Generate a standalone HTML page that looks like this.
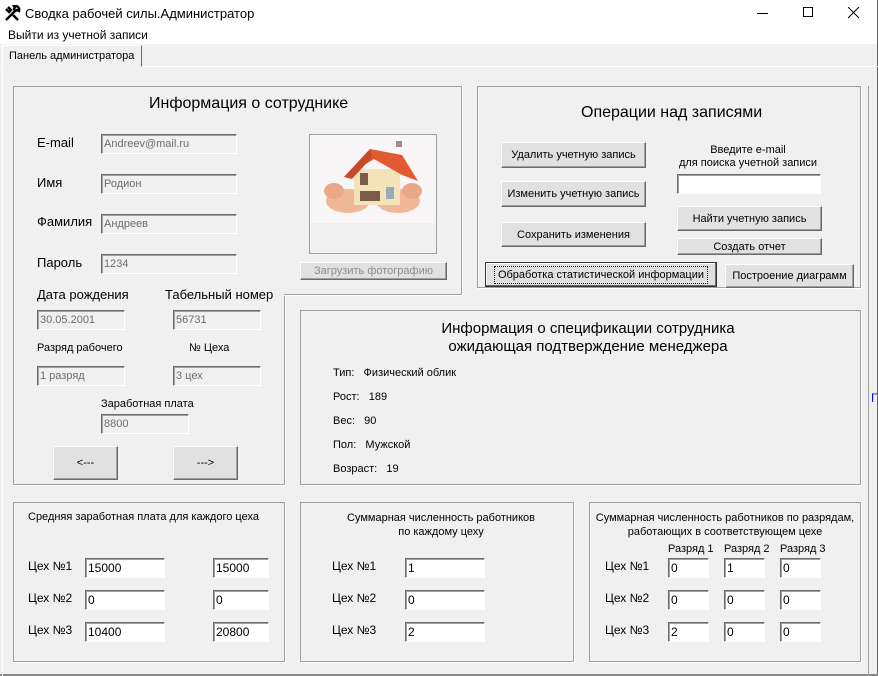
<!DOCTYPE html><html><head><meta charset="utf-8"><style>
*{margin:0;padding:0;box-sizing:border-box}
body{width:878px;height:676px;background:#f0f0f0;position:relative;overflow:hidden;font-family:"Liberation Sans","DejaVu Sans",sans-serif;font-size:11px;color:#000}
.a{position:absolute;white-space:nowrap}
.tb{position:absolute;height:20px;border:1px solid;border-color:#6d6d6d #fff #fff #6d6d6d;box-shadow:inset 1px 1px #a0a0a0;background:#f0f0f0;color:#6d6d6d;font-size:11px;padding:3px 0 0 2px;line-height:13px;white-space:nowrap}
.w{background:#fff;color:#000;font-size:12px}
.bt{position:absolute;background:#e1e1e1;border:1px solid;border-color:#fff #696969 #696969 #fff;box-shadow:inset -1px -1px #a0a0a0;display:flex;align-items:center;justify-content:center;font-size:11px;white-space:nowrap}
.pn{position:absolute;border:1px solid #a0a0a0;box-shadow:1px 1px #fff}
.c{text-align:center}
</style></head><body>
<div class="a" style="left:0;top:0;width:878px;height:44px;background:#fff"></div>
<div class="a" style="left:877px;top:0;width:1px;height:676px;background:#666"></div>
<div class="a" style="left:0;top:674px;width:878px;height:2px;background:#888"></div>
<svg class="a" style="left:4px;top:5px" width="17" height="17" viewBox="0 0 17 17"><path d="M2 15L11 6M4 2l3 3-2 2-3-3M10 1a4 4 0 0 1 5 5l-2-1-2 1-1-2 1-2zM9 10l5 5" stroke="#000" stroke-width="2.4" fill="none"/></svg>
<div class="a" style="left:25px;top:6px;font-size:13px">Сводка рабочей силы.Администратор</div>
<div class="a" style="left:757px;top:13px;width:11px;height:1px;background:#000"></div>
<div class="a" style="left:803px;top:7px;width:10px;height:10px;border:1px solid #000"></div>
<svg class="a" style="left:848px;top:7px" width="12" height="12"><path d="M0 0L11 11M11 0L0 11" stroke="#000"/></svg>
<div class="a" style="left:8px;top:28px;font-size:12px">Выйти из учетной записи</div>
<div class="a" style="left:0;top:66px;width:878px;height:1px;background:#fff"></div>
<div class="a" style="left:2px;top:45px;width:140px;height:22px;background:#f0f0f0;border:1px solid;border-color:#fff #696969 #f0f0f0 #fff;padding:4px 0 0 6px;font-size:11px;white-space:nowrap">Панель администратора</div>
<div class="a" style="left:2px;top:67px;width:1px;height:609px;background:#fff"></div>
<div class="a" style="left:868px;top:86px;width:1px;height:590px;background:#a0a0a0"></div>
<div class="a" style="left:871px;top:391px;color:#00f;font-size:12px">Г</div>

<div class="a" style="left:13px;top:86px;width:449px;height:209px;border:1px solid #a0a0a0;border-bottom:none;box-shadow:1px 0 #fff"></div>
<div class="a" style="left:13px;top:294px;width:272px;height:191px;border:1px solid #a0a0a0;border-top:none;box-shadow:1px 1px #fff"></div>
<div class="a" style="left:284px;top:294px;width:178px;height:1px;background:#a0a0a0;box-shadow:0 1px #fff"></div>
<div class="a" style="left:14px;top:293px;width:270px;height:3px;background:#f0f0f0"></div>

<div class="a" style="left:149px;top:95px;font-size:16px">Информация о сотруднике</div>
<div class="a" style="left:37px;top:135px;font-size:13px">E-mail</div>
<div class="a" style="left:37px;top:175px;font-size:13px">Имя</div>
<div class="a" style="left:37px;top:214px;font-size:13px">Фамилия</div>
<div class="a" style="left:37px;top:255px;font-size:13px">Пароль</div>
<div class="tb" style="left:101px;top:134px;width:136px">Andreev@mail.ru</div>
<div class="tb" style="left:101px;top:174px;width:136px">Родион</div>
<div class="tb" style="left:101px;top:214px;width:136px">Андреев</div>
<div class="tb" style="left:101px;top:254px;width:136px">1234</div>
<div class="a" style="left:37px;top:287px;font-size:13px">Дата рождения</div>
<div class="a" style="left:165px;top:287px;font-size:13px">Табельный номер</div>
<div class="tb" style="left:37px;top:310px;width:88px">30.05.2001</div>
<div class="tb" style="left:173px;top:310px;width:88px">56731</div>
<div class="a" style="left:37px;top:342px">Разряд рабочего</div>
<div class="a" style="left:189px;top:342px">№ Цеха</div>
<div class="tb" style="left:37px;top:366px;width:88px">1 разряд</div>
<div class="tb" style="left:173px;top:366px;width:88px">3 цех</div>
<div class="a" style="left:101px;top:398px">Заработная плата</div>
<div class="tb" style="left:101px;top:414px;width:88px">8800</div>
<div class="bt" style="left:53px;top:446px;width:65px;height:34px">&lt;---</div>
<div class="bt" style="left:173px;top:446px;width:65px;height:34px">---&gt;</div>

<div class="a" style="left:309px;top:134px;width:128px;height:120px;border:1px solid #a0a0a0;background:#f0f0f0"></div>
<svg class="a" style="left:310px;top:135px" width="126" height="88" viewBox="0 0 126 88"><rect width="126" height="88" fill="#f8f6f6"/>
<ellipse cx="38" cy="66" rx="22" ry="12" fill="#f0b898"/><ellipse cx="88" cy="66" rx="22" ry="12" fill="#f0b898"/><ellipse cx="24" cy="56" rx="10" ry="8" fill="#eaa888"/><ellipse cx="102" cy="56" rx="10" ry="8" fill="#eaa888"/>
<rect x="44" y="34" width="46" height="36" fill="#f4e2b8"/><path d="M34 42L60 14L92 20L108 46L92 40L64 24Z" fill="#e25a30"/><path d="M60 14L34 42L42 44L62 22Z" fill="#c84a26"/>
<rect x="50" y="38" width="8" height="12" fill="#7a5a48"/><rect x="50" y="56" width="20" height="10" fill="#7a5a48"/><rect x="76" y="52" width="8" height="12" fill="#9ab"/><rect x="86" y="6" width="6" height="6" fill="#a88"/></svg>
<div class="bt" style="left:300px;top:262px;width:147px;height:18px;color:#8d8d8d">Загрузить фотографию</div>

<div class="pn" style="left:477px;top:86px;width:384px;height:202px"></div>
<div class="a" style="left:581px;top:104px;font-size:16px">Операции над записями</div>
<div class="bt" style="left:501px;top:142px;width:145px;height:26px">Удалить учетную запись</div>
<div class="bt" style="left:501px;top:181px;width:145px;height:26px">Изменить учетную запись</div>
<div class="bt" style="left:501px;top:222px;width:145px;height:25px">Сохранить изменения</div>
<div class="a c" style="left:668px;top:144px;width:160px;line-height:13px">Введите e-mail<br>для поиска учетной записи</div>
<div class="tb w" style="left:677px;top:174px;width:144px"></div>
<div class="bt" style="left:677px;top:206px;width:145px;height:25px">Найти учетную запись</div>
<div class="bt" style="left:677px;top:238px;width:145px;height:17px">Создать отчет</div>
<div class="bt" style="left:485px;top:262px;width:232px;height:25px;border:1px solid #333;box-shadow:inset -1px -1px #696969,inset 1px 1px #fff"><span style="outline:1px dotted #000;outline-offset:2px;padding:0 1px">Обработка статистической информации</span></div>
<div class="bt" style="left:725px;top:264px;width:129px;height:24px">Построение диаграмм</div>

<div class="pn" style="left:300px;top:310px;width:561px;height:175px"></div>
<div class="a c" style="left:300px;top:320px;width:576px;font-size:15px;line-height:18px">Информация о спецификации сотрудника<br>ожидающая подтверждение менеджера</div>
<div class="a" style="left:333px;top:367px;font-size:11px">Тип:&nbsp;&nbsp; Физический облик</div>
<div class="a" style="left:333px;top:391px;font-size:11px">Рост:&nbsp;&nbsp; 189</div>
<div class="a" style="left:333px;top:415px;font-size:11px">Вес:&nbsp;&nbsp; 90</div>
<div class="a" style="left:333px;top:439px;font-size:11px">Пол:&nbsp;&nbsp; Мужской</div>
<div class="a" style="left:333px;top:463px;font-size:11px">Возраст:&nbsp;&nbsp; 19</div>

<div class="pn" style="left:13px;top:502px;width:272px;height:160px"></div>
<div class="a" style="left:28px;top:511px">Средняя заработная плата для каждого цеха</div>
<div class="a" style="left:28px;top:559px;font-size:12px">Цех №1</div><div class="a" style="left:28px;top:591px;font-size:12px">Цех №2</div><div class="a" style="left:28px;top:623px;font-size:12px">Цех №3</div>
<div class="tb w" style="left:85px;top:558px;width:80px">15000</div><div class="tb w" style="left:213px;top:558px;width:56px">15000</div>
<div class="tb w" style="left:85px;top:590px;width:80px">0</div><div class="tb w" style="left:213px;top:590px;width:56px">0</div>
<div class="tb w" style="left:85px;top:622px;width:80px">10400</div><div class="tb w" style="left:213px;top:622px;width:56px">20800</div>

<div class="pn" style="left:300px;top:502px;width:274px;height:160px"></div>
<div class="a c" style="left:300px;top:511px;width:282px;line-height:14px">Суммарная численность работников<br>по каждому цеху</div>
<div class="a" style="left:332px;top:559px;font-size:12px">Цех №1</div><div class="a" style="left:332px;top:591px;font-size:12px">Цех №2</div><div class="a" style="left:332px;top:623px;font-size:12px">Цех №3</div>
<div class="tb w" style="left:405px;top:558px;width:80px">1</div>
<div class="tb w" style="left:405px;top:590px;width:80px">0</div>
<div class="tb w" style="left:405px;top:622px;width:80px">2</div>

<div class="pn" style="left:589px;top:502px;width:272px;height:160px"></div>
<div class="a c" style="left:589px;top:511px;width:272px;line-height:14px">Суммарная численность работников по разрядам,<br>работающих в соответствующем цехе</div>
<div class="a" style="left:668px;top:543px">Разряд 1</div><div class="a" style="left:724px;top:543px">Разряд 2</div><div class="a" style="left:780px;top:543px">Разряд 3</div>
<div class="a" style="left:605px;top:559px;font-size:12px">Цех №1</div><div class="a" style="left:605px;top:591px;font-size:12px">Цех №2</div><div class="a" style="left:605px;top:623px;font-size:12px">Цех №3</div>
<div class="tb w" style="left:668px;top:558px;width:41px">0</div><div class="tb w" style="left:724px;top:558px;width:41px">1</div><div class="tb w" style="left:780px;top:558px;width:41px">0</div>
<div class="tb w" style="left:668px;top:590px;width:41px">0</div><div class="tb w" style="left:724px;top:590px;width:41px">0</div><div class="tb w" style="left:780px;top:590px;width:41px">0</div>
<div class="tb w" style="left:668px;top:622px;width:41px">2</div><div class="tb w" style="left:724px;top:622px;width:41px">0</div><div class="tb w" style="left:780px;top:622px;width:41px">0</div>
</body></html>
